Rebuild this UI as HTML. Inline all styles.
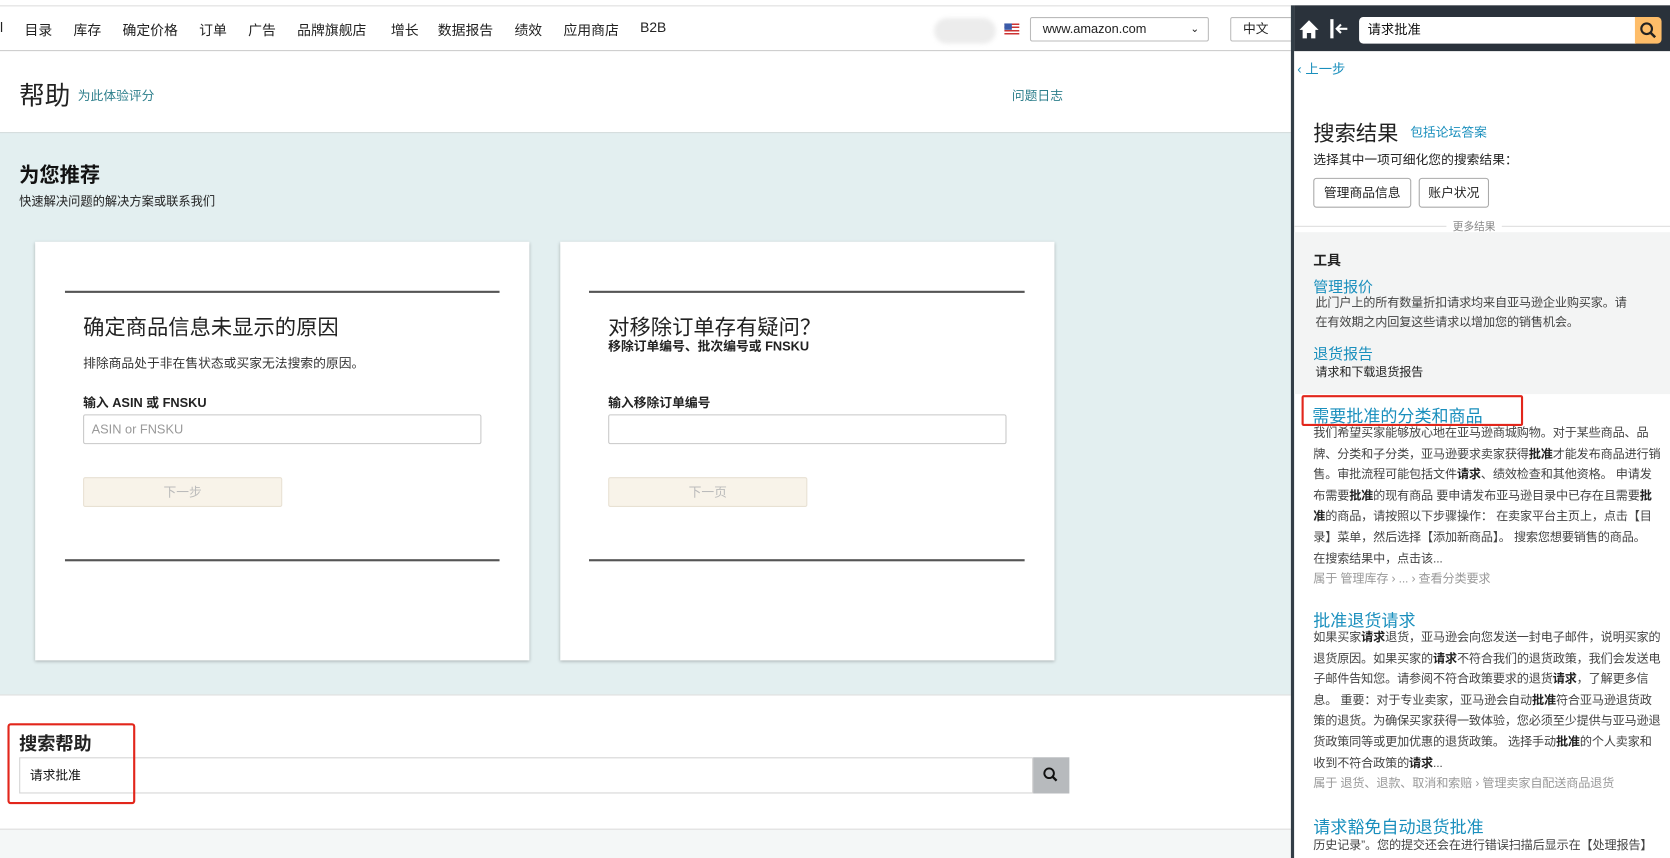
<!DOCTYPE html>
<html><head><meta charset="utf-8">
<style>
*{margin:0;padding:0;box-sizing:border-box}
html,body{width:1670px;height:858px;overflow:hidden;background:#fff}
body{font-family:"Liberation Sans","Noto Sans CJK SC",sans-serif;color:#111}
#w{position:absolute;left:0;top:0;width:1568px;height:806px;transform:scale(1.0651);transform-origin:0 0}
.a{position:absolute;white-space:nowrap}
.nav span{position:absolute;top:18px;font-size:13px;color:#222}
.card{position:absolute;top:227px;width:464px;height:393px;background:#fff;box-shadow:0 1px 3px rgba(0,0,0,.25)}
.hl{position:absolute;height:2px;background:#555}
.inp{position:absolute;height:28px;border:1px solid #c8c8c8;border-radius:2px;background:#fff}
.btn{position:absolute;height:28px;width:187px;background:#f8f3e9;border:1px solid #e8e1d3;border-radius:2px;color:#bbb;font-size:12px;text-align:center;line-height:26px}
.rp{position:absolute;left:1212px;top:5px;width:356px;height:801px;background:#fff;border-left:3px solid #333e47}
.t{font-size:11.4px;color:#444;line-height:19.6px;letter-spacing:-.15px}
.t b{color:#222}
.lk{color:#1a8fbd}
</style></head><body><div id="w">
<div class="a" style="left:0;top:5px;width:1212px;height:1px;background:#ddd"></div>
<div class="nav">
<span style="left:0">l</span><span style="left:23px">目录</span><span style="left:69px">库存</span><span style="left:115px">确定价格</span><span style="left:187px">订单</span><span style="left:233px">广告</span><span style="left:279px">品牌旗舰店</span><span style="left:367px">增长</span><span style="left:411px">数据报告</span><span style="left:483px">绩效</span><span style="left:529px">应用商店</span><span style="left:601px">B2B</span>
</div>
<div class="a" style="left:877px;top:17px;width:58px;height:24px;background:#ececec;border-radius:12px;filter:blur(2px)"></div>
<div class="a" style="left:943px;top:22px;width:14px;height:11px;background:repeating-linear-gradient(#c33 0 1.5px,#fff 1.5px 3px)"><div style="width:7px;height:6px;background:#3b5ba9"></div></div>
<div class="a" style="left:967px;top:16px;width:168px;height:23px;border:1px solid #bbb;border-radius:2px;font-size:12px;line-height:21px;padding-left:11px;color:#222">www.amazon.com<span style="position:absolute;right:8px;font-size:10px">&#8964;</span></div>
<div class="a" style="left:1155px;top:16px;width:60px;height:23px;border:1px solid #bbb;border-radius:2px;font-size:12px;line-height:21px;padding-left:11px;color:#222">中文</div>
<div class="a" style="left:0;top:47px;width:1212px;height:1px;background:#ccc"></div>
<div class="a" style="left:18px;top:70px;font-size:24px;color:#222">帮助</div>
<div class="a" style="left:73px;top:81px;font-size:12px;color:#2e7f8c">为此体验评分</div>
<div class="a" style="left:950px;top:81px;font-size:12px;color:#2e7f8c">问题日志</div>
<div class="a" style="left:0;top:124px;width:1212px;height:528px;background:#e3eff0;border-top:1px solid #d5dcdc"></div>
<div class="a" style="left:18px;top:150px;font-size:19px;font-weight:bold;color:#111">为您推荐</div>
<div class="a" style="left:18px;top:181px;font-size:11.5px;color:#222">快速解决问题的解决方案或联系我们</div>
<div class="card" style="left:33px">
<div class="hl" style="left:28px;top:46px;width:408px"></div>
<div class="a" style="left:45px;top:64px;font-size:20px;color:#222">确定商品信息未显示的原因</div>
<div class="a" style="left:45px;top:105px;font-size:12px;color:#333">排除商品处于非在售状态或买家无法搜索的原因。</div>
<div class="a" style="left:45px;top:142px;font-size:12px;font-weight:bold;color:#222">输入 ASIN 或 FNSKU</div>
<div class="inp" style="left:45px;top:162px;width:374px;font-size:12px;color:#999;line-height:26px;padding-left:7px">ASIN or FNSKU</div>
<div class="btn" style="left:45px;top:221px">下一步</div>
<div class="hl" style="left:28px;top:298px;width:408px"></div>
</div>
<div class="card" style="left:526px">
<div class="hl" style="left:27px;top:46px;width:409px"></div>
<div class="a" style="left:45px;top:64px;font-size:20px;color:#222">对移除订单存有疑问？</div>
<div class="a" style="left:45px;top:89px;font-size:12px;font-weight:bold;color:#222">移除订单编号、批次编号或 FNSKU</div>
<div class="a" style="left:45px;top:142px;font-size:12px;font-weight:bold;color:#222">输入移除订单编号</div>
<div class="inp" style="left:45px;top:162px;width:374px"></div>
<div class="btn" style="left:45px;top:221px">下一页</div>
<div class="hl" style="left:27px;top:298px;width:409px"></div>
</div>
<div class="a" style="left:0;top:652px;width:1212px;height:1px;background:#ddd"></div>
<div class="a" style="left:18px;top:684px;font-size:17px;font-weight:bold;color:#222">搜索帮助</div>
<div class="a" style="left:18px;top:711px;width:952px;height:34px;border:1px solid #d4d4d4;font-size:12px;line-height:32px;padding-left:9px;color:#111">请求批准</div>
<div class="a" style="left:970px;top:711px;width:34px;height:34px;background:#b7babd"><svg width="34" height="34"><circle cx="15" cy="15" r="4.5" fill="none" stroke="#111" stroke-width="1.8"/><path d="M18 18l4 4" stroke="#111" stroke-width="2.2"/></svg></div>
<div class="a" style="left:7px;top:679px;width:120px;height:76px;border:2px solid #e2261b;border-radius:3px"></div>
<div class="a" style="left:0;top:778px;width:1212px;height:28px;background:#f4f7f7;border-top:1px solid #ddd"></div>

<div class="rp">
<div class="a" style="left:0;top:0;width:353px;height:43px;background:#2a323b"></div>
<svg class="a" style="left:4px;top:12px" width="20" height="20"><path d="M10 2L1 11h3v8h4v-5h4v5h4v-8h3z" fill="#fff"/></svg>
<svg class="a" style="left:33px;top:12px" width="20" height="20"><rect x="1" y="1" width="3" height="18" fill="#fff"/><path d="M17 10H8M11 6l-4 4 4 4" stroke="#fff" stroke-width="2" fill="none"/></svg>
<div class="a" style="left:61px;top:11px;width:260px;height:25px;background:#fff;border-radius:4px 0 0 4px;font-size:12.5px;line-height:25px;padding-left:8px;color:#111">请求批准</div>
<div class="a" style="left:320px;top:11px;width:25px;height:25px;background:#febd69;border-radius:0 4px 4px 0"><svg width="25" height="25"><circle cx="11" cy="11" r="5" fill="none" stroke="#222" stroke-width="2"/><path d="M14.5 14.5l4.5 4.5" stroke="#222" stroke-width="2.4"/></svg></div>
<div class="a lk" style="left:3px;top:49px;font-size:12.5px">‹ 上一步</div>
<div class="a" style="left:18px;top:104px;font-size:20px;color:#222">搜索结果</div>
<div class="a lk" style="left:109px;top:110px;font-size:12px">包括论坛答案</div>
<div class="a" style="left:18px;top:136px;font-size:12px;color:#222">选择其中一项可细化您的搜索结果：</div>
<div class="a" style="left:18px;top:162px;width:92px;height:28px;border:1px solid #aaa;border-radius:3px;font-size:12px;line-height:26px;text-align:center;color:#222">管理商品信息</div>
<div class="a" style="left:117px;top:162px;width:66px;height:28px;border:1px solid #aaa;border-radius:3px;font-size:12px;line-height:26px;text-align:center;color:#222">账户状况</div>
<div class="a" style="left:0;top:207px;width:353px;height:1px;background:#ddd"></div>
<div class="a" style="left:143px;top:199px;padding:0 6px;background:#fff;font-size:10px;color:#888">更多结果</div>
<div class="a" style="left:0;top:213px;width:353px;height:152px;background:#f3f4f4"></div>
<div class="a" style="left:18px;top:229px;font-size:13px;font-weight:bold;color:#222">工具</div>
<div class="a lk" style="left:18px;top:254px;font-size:14px">管理报价</div>
<div class="a t" style="left:20px;top:271px">此门户上的所有数量折扣请求均来自亚马逊企业购买家。请</div>
<div class="a t" style="left:20px;top:289px">在有效期之内回复这些请求以增加您的销售机会。</div>
<div class="a lk" style="left:18px;top:317px;font-size:14px">退货报告</div>
<div class="a t" style="left:20px;top:336px;color:#222">请求和下载退货报告</div>
<div class="a lk" style="left:17px;top:372px;font-size:16px">需要批准的分类和商品</div>
<div class="a t" style="left:18px;top:393px">我们希望买家能够放心地在亚马逊商城购物。对于某些商品、品<br>牌、分类和子分类，亚马逊要求卖家获得<b>批准</b>才能发布商品进行销<br>售。审批流程可能包括文件<b>请求</b>、绩效检查和其他资格。 申请发<br>布需要<b>批准</b>的现有商品 要申请发布亚马逊目录中已存在且需要<b>批</b><br><b>准</b>的商品，请按照以下步骤操作： 在卖家平台主页上，点击【目<br>录】菜单，然后选择【添加新商品】。 搜索您想要销售的商品。<br>在搜索结果中，点击该...<br><span style="color:#999">属于 管理库存 › ... › 查看分类要求</span></div>
<div class="a" style="left:7px;top:366px;width:208px;height:29px;border:2px solid #e2261b;border-radius:2px"></div>
<div class="a lk" style="left:18px;top:564px;font-size:16px">批准退货请求</div>
<div class="a t" style="left:18px;top:585px">如果买家<b>请求</b>退货，亚马逊会向您发送一封电子邮件，说明买家的<br>退货原因。如果买家的<b>请求</b>不符合我们的退货政策，我们会发送电<br>子邮件告知您。请参阅不符合政策要求的退货<b>请求</b>，了解更多信<br>息。 重要：对于专业卖家，亚马逊会自动<b>批准</b>符合亚马逊退货政<br>策的退货。为确保买家获得一致体验，您必须至少提供与亚马逊退<br>货政策同等或更加优惠的退货政策。 选择手动<b>批准</b>的个人卖家和<br>收到不符合政策的<b>请求</b>...<br><span style="color:#999">属于 退货、退款、取消和索赔 › 管理卖家自配送商品退货</span></div>
<div class="a lk" style="left:18px;top:758px;font-size:16px">请求豁免自动退货批准</div>
<div class="a t" style="left:18px;top:780px">历史记录”。您的提交还会在进行错误扫描后显示在【处理报告】</div>
</div>
</div></body></html>
